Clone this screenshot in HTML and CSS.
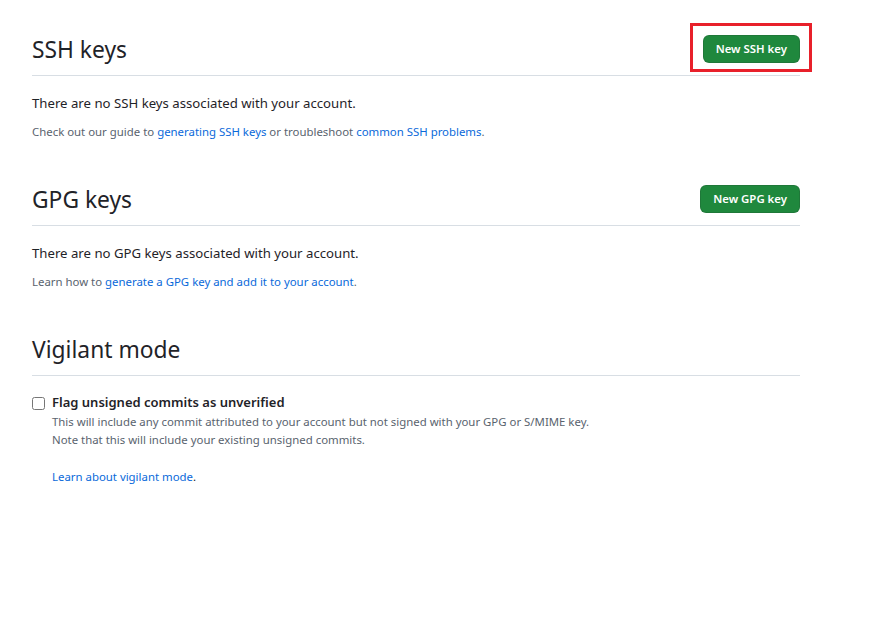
FILE: index.html
```html
<!DOCTYPE html>
<html lang="en">
<head>
<meta charset="utf-8">
<title>SSH and GPG keys</title>
<link rel="stylesheet" href="styles.css">
</head>
<body>
<main class="settings">
  <section class="section">
    <div class="subhead">
      <h2 class="subhead-heading">SSH keys</h2>
      <div class="subhead-actions">
        <a class="btn btn-primary btn-highlighted" href="#">New SSH key</a>
      </div>
    </div>
    <p class="lead-text">There are no SSH keys associated with your account.</p>
    <p class="note">Check out our guide to <a href="#">generating SSH keys</a> or troubleshoot <a href="#">common SSH problems</a>.</p>
  </section>

  <section class="section">
    <div class="subhead">
      <h2 class="subhead-heading">GPG keys</h2>
      <div class="subhead-actions">
        <a class="btn btn-primary" href="#">New GPG key</a>
      </div>
    </div>
    <p class="lead-text">There are no GPG keys associated with your account.</p>
    <p class="note">Learn how to <a href="#">generate a GPG key and add it to your account</a>.</p>
  </section>

  <section class="section">
    <div class="subhead">
      <h2 class="subhead-heading">Vigilant mode</h2>
    </div>
    <div class="form-checkbox">
      <label class="checkbox-label"><input type="checkbox" class="checkbox-input"><span>Flag unsigned commits as unverified</span></label>
      <p class="checkbox-note">This will include any commit attributed to your account but not signed with your GPG or S/MIME key.<br>Note that this will include your existing unsigned commits.</p>
      <p class="checkbox-link"><a href="#">Learn about vigilant mode</a>.</p>
    </div>
  </section>
</main>
</body>
</html>
```

FILE: styles.css
```css
* { box-sizing: border-box; }

html, body {
  margin: 0;
  padding: 0;
  background: #ffffff;
}

body {
  font-family: "Noto Sans", "Segoe UI", "Liberation Sans", sans-serif;
  font-size: 13.2px;
  line-height: 21px;
  color: #1f2328;
}

a {
  color: #0969da;
  text-decoration: none;
}

.settings {
  width: 768px;
  margin-left: 32px;
  padding-top: 31px;
}

.section + .section {
  margin-top: 40px;
}

.subhead {
  display: flex;
  align-items: center;
  justify-content: space-between;
  padding-bottom: 8px;
  margin-bottom: 16px;
  border-bottom: 1px solid #d8dee4;
}

.subhead-heading {
  margin: 0;
  padding-top: 2px;
  font-size: 22.8px;
  font-weight: 400;
  line-height: 34px;
}

.subhead-actions {
  display: flex;
}

.btn {
  position: relative;
  display: inline-block;
  padding: 3px 12px;
  font-size: 11.4px;
  font-weight: 600;
  line-height: 20px;
  border-radius: 6px;
  border: 1px solid rgba(31, 35, 40, 0.15);
  white-space: nowrap;
}

.btn-primary {
  background: #1f883d;
  color: #ffffff;
}

.btn-highlighted::after {
  content: "";
  position: absolute;
  left: -14px;
  right: -13px;
  top: -13px;
  bottom: -10px;
  border: 3px solid #e8202a;
  pointer-events: none;
}

.lead-text {
  margin: 0 0 10px;
  padding-top: 1px;
  line-height: 20px;
}

.note {
  margin: 0;
  font-size: 11.4px;
  line-height: 18px;
  color: #59636e;
}

.form-checkbox {
  padding-left: 20px;
}

.checkbox-label {
  display: flex;
  align-items: center;
  font-size: 13px;
  font-weight: 600;
  line-height: 21px;
}

.checkbox-input {
  flex: none;
  width: 13px;
  height: 13px;
  margin: 1px 7px 0 -20px;
}

.checkbox-note {
  margin: 0;
  font-size: 11.4px;
  line-height: 18px;
  color: #59636e;
}

.checkbox-link {
  margin: 19px 0 0;
  font-size: 11.4px;
  line-height: 18px;
}
```
